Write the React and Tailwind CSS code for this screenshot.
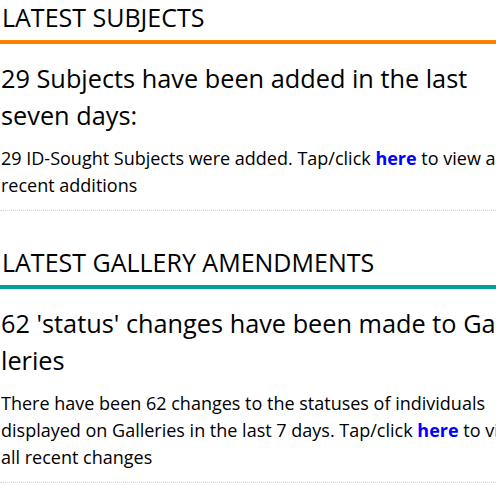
const sections = [
    {
        title: 'LATEST SUBJECTS',
        bar: 'bg-[#ff8000]',
        heading: '29 Subjects have been added in the last seven days:',
        before: '29 ID-Sought Subjects were added. Tap/click ',
        after: ' to view all recent additions',
    },
    {
        title: 'LATEST GALLERY AMENDMENTS',
        bar: 'bg-[#00a199]',
        heading: "62 'status' changes have been made to Gal\u00ADleries",
        before: 'There have been 62 changes to the statuses of individuals displayed on Galleries in the last 7 days. Tap/click ',
        after: ' to view all recent changes',
    },
];

const App = () => {
    return (
        <div lang="en" className="w-full h-screen overflow-hidden bg-white text-black font-['Open_Sans',sans-serif]">
            <div className="w-[530px]">
                {sections.map((s) => (
                    <div key={s.title} className="border-b border-dotted border-[#d4d4d4] pb-[11px] mb-[34px]">
                        <h2 className="text-[25px] leading-[34px] pl-[2px]">{s.title}</h2>
                        <div className={`h-[4px] ${s.bar} mt-[6px] w-[496px]`}></div>
                        <h3 className="text-[25.3px] leading-[37px] mt-[16px] pl-[1px]">{s.heading}</h3>
                        <p className="text-[18px] leading-[27px] mt-[11px] pl-[1px]">
                            {s.before}
                            <a href="#" className="text-[#0000ff] font-bold">here</a>
                            {s.after}
                        </p>
                    </div>
                ))}
            </div>
        </div>
    );
};

export default App;
